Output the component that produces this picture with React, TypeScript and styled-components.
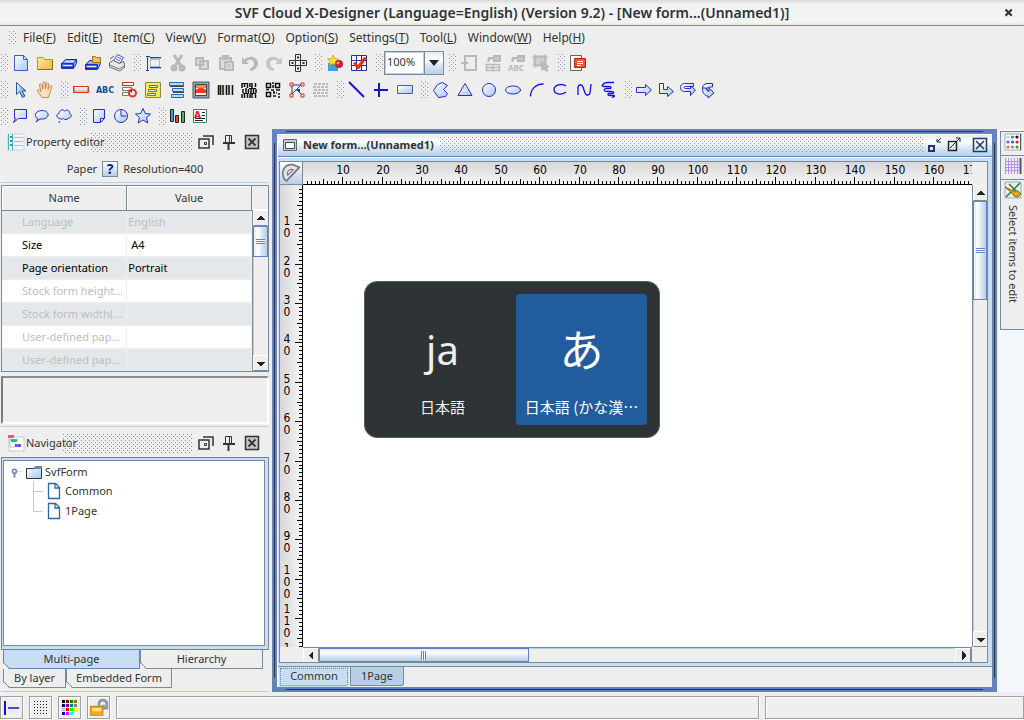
import React, { useEffect, useRef, useState } from "react";
import styled, { createGlobalStyle, css } from "styled-components";

const BLUE = "#6382bf";
const GREY = "#7a8a99";
const PALE = "#b8cfe5";
const SKY = "#c8ddf2";
const FACE = "#eeeeee";
const INK = "#333333";

const GlobalStyle = createGlobalStyle`
  *, *::before, *::after { box-sizing: border-box; }
  body {
    margin: 0;
    background: ${FACE};
    color: ${INK};
    font: 11px/16px "Noto Sans", "Noto Sans CJK JP", sans-serif;
  }
  button, input { font: inherit; color: inherit; }
`;

const dots = (color: string) => css`
  background-image:
    conic-gradient(from 270deg at 1px 1px, ${color} 25%, transparent 0),
    conic-gradient(from 270deg at 1px 1px, ${color} 25%, transparent 0);
  background-size: 4px 4px;
  background-position: 0 0, 2px 2px;
`;

/* ---------- shell ---------- */

const Shell = styled.div`
  display: flex;
  flex-direction: column;
  height: 100vh;
  overflow: hidden;
`;

const TitleBar = styled.header`
  display: flex;
  align-items: center;
  flex: none;
  height: 26px;
  padding: 0 8px 0 22px;
  border-bottom: 1px solid #8b8e7f;
  background: linear-gradient(#d8d8d8, #f1f1f1 4px, #f5f5f5 22px, #e4e4e0);
`;

const AppTitle = styled.h1`
  flex: 1;
  margin: 0;
  text-align: center;
  color: #2e3436;
  font-size: 14px;
  line-height: 20px;
  font-weight: 600;
`;

const PlainButton = styled.button`
  display: flex;
  align-items: center;
  justify-content: center;
  flex: none;
  padding: 0;
  border: 0;
  background: none;
`;

const MenuBar = styled.nav`
  display: flex;
  align-items: center;
  flex: none;
  gap: 6px;
  height: 23px;
  padding-left: 9px;
`;

const MenuItems = styled.div`
  display: flex;
  gap: 11px;
`;

const MenuButton = styled(PlainButton)`
  display: block;
  font-size: 12px;
  white-space: nowrap;
`;

const Grip = styled.span<{ $h?: number }>`
  flex: none;
  width: 8px;
  height: ${(p) => p.$h ?? 17}px;
  ${dots("#8d99a6")}
`;

const ToolRow = styled.div<{ $gap: number; $h?: number }>`
  display: flex;
  align-items: center;
  flex: none;
  gap: ${(p) => p.$gap}px;
  height: ${(p) => p.$h ?? 27}px;
  padding-left: 1px;
`;

const ToolGroup = styled.div`
  display: flex;
  align-items: center;
`;

const ToolButton = styled(PlainButton)<{ $w: number }>`
  width: ${(p) => p.$w}px;
  height: 24px;
`;

const Zoom = styled.div`
  display: flex;
  width: 60px;
  height: 24px;
  border: 1px solid ${GREY};
`;

const ZoomInput = styled.input`
  width: 39px;
  min-width: 0;
  padding: 0 0 2px 1px;
  border: 1px solid ${PALE};
  background: #fff;
`;

const ZoomArrow = styled(PlainButton)`
  flex: 1;
  border-left: 1px solid ${GREY};
  background: linear-gradient(#dfe9f5, #ffffff 35%, #dbe7f4 60%, ${PALE});
`;

const Body = styled.div`
  display: flex;
  flex: 1;
  min-height: 0;
`;

/* ---------- docked panels ---------- */

const Dock = styled.aside`
  display: flex;
  flex-direction: column;
  flex: none;
  width: 269px;
  margin-right: 3px;
  padding-left: 1px;
`;

const PanelHead = styled.div`
  display: flex;
  align-items: center;
  flex: none;
  height: 26px;
  padding: 0 8px 0 6px;
`;

const PanelTitle = styled.h2`
  margin: 0 0 0 1px;
  font-size: 11px;
  line-height: 16px;
  font-weight: 400;
  white-space: nowrap;
`;

const PanelBumps = styled.span<{ $lap: number }>`
  flex: 1;
  height: 19px;
  margin: 0 5px 0 -${(p) => p.$lap}px;
  ${dots("#8593a1")}
`;

const HeadTools = styled.div`
  display: flex;
  gap: 5px;
`;

const HeadTool = styled(PlainButton)`
  width: 18px;
  height: 18px;
`;

const PaperLine = styled.div`
  display: flex;
  align-items: center;
  justify-content: center;
  flex: none;
  gap: 5px;
  height: 28px;
  margin-bottom: 2px;
  border-bottom: 1px solid ${PALE};
`;

const HelpButton = styled(PlainButton)`
  width: 16px;
  height: 16px;
  border: 1px solid ${GREY};
  background: linear-gradient(#fff, ${PALE});
  color: #1414a8;
  font-size: 14px;
  line-height: 14px;
  font-weight: 700;
`;

const PropBox = styled.div`
  display: flex;
  flex: none;
  height: 187px;
  border: 1px solid ${GREY};
  overflow: hidden;
`;

const PropTable = styled.table`
  width: calc(100% - 16px);
  border-collapse: collapse;
  table-layout: fixed;
`;

const HeadCell = styled.th`
  width: 50%;
  height: 24px;
  padding: 0;
  border-right: 1px solid ${GREY};
  border-bottom: 1px solid ${GREY};
  box-shadow: inset 1px 1px #fff;
  font-weight: 400;
`;

const PropRow = styled.tr<{ $on?: boolean }>`
  color: ${(p) => (p.$on ? "#000" : "#bdbdbd")};
  background: #fff;
  &:nth-child(odd) { background: #e4e8eb; }
`;

const PropCell = styled.td<{ $pad: number }>`
  height: 23px;
  padding: 0 0 0 ${(p) => p.$pad}px;
  border-right: 1px solid ${FACE};
  border-bottom: 1px solid ${FACE};
  line-height: 16px;
  white-space: nowrap;
`;

const BarColumn = styled.div`
  display: flex;
  flex-direction: column;
  width: 16px;
`;

const BarHead = styled.div`
  flex: none;
  height: 24px;
  border-bottom: 1px solid #fff;
`;

const Note = styled.div`
  flex: none;
  height: 48px;
  margin-top: 4px;
  border: 2px solid;
  border-color: #8c8c8c #fff #fff #7c7c7c;
`;

const Rule = styled.hr`
  flex: none;
  width: 100%;
  height: 1px;
  margin: 2px 0 3px;
  border: 0;
  background: ${PALE};
`;

const TreeFrame = styled.div`
  display: flex;
  flex: 1;
  min-height: 0;
  margin-top: 1px;
  padding: 2px 3px 3px 1px;
  border: 1px solid ${BLUE};
  border-right-color: ${GREY};
  background: ${SKY};
`;

const Tree = styled.ul`
  flex: 1;
  margin: 0;
  padding: 1px 0 0 5px;
  border: 1px solid ${GREY};
  background: #fff;
  list-style: none;
`;

const TreeItem = styled.li<{ $child?: boolean }>`
  display: flex;
  align-items: center;
  gap: 2px;
  height: ${(p) => (p.$child ? 20 : 19)}px;
  padding-left: ${(p) => (p.$child ? 18 : 0)}px;
`;

const Tabs = styled.div`
  display: flex;
  flex: none;
  padding-left: 2px;
`;

const DockTab = styled.button<{ $w: number; $on?: boolean }>`
  width: ${(p) => p.$w}px;
  height: 19px;
  padding: 0;
  border: 1px solid ${(p) => (p.$on ? BLUE : GREY)};
  border-top: 0;
  background: ${(p) => (p.$on ? SKY : FACE)};
  line-height: 16px;
  clip-path: polygon(0 0, 100% 0, 100% 100%, 6px 100%, 0 13px);
  background-image: linear-gradient(
    45deg,
    transparent 3px,
    ${(p) => (p.$on ? BLUE : GREY)} 3px,
    ${(p) => (p.$on ? BLUE : GREY)} 4px,
    transparent 4px
  );
`;

const DockFoot = styled.div`
  flex: none;
  height: 4px;
  border-bottom: 1px solid ${PALE};
`;

/* ---------- document window ---------- */

const Desk = styled.main`
  display: flex;
  flex: 1;
  min-width: 0;
  padding: 2px;
  background: ${BLUE};
`;

const DeskLine = styled.div`
  display: flex;
  flex: 1;
  min-width: 0;
  padding: 3px;
  background:
    linear-gradient(#333, #333) center top / calc(100% - 24px) 1px no-repeat,
    linear-gradient(#333, #333) center bottom / calc(100% - 24px) 1px no-repeat,
    linear-gradient(#333, #333) left center / 1px calc(100% - 24px) no-repeat,
    linear-gradient(#333, #333) right center / 1px calc(100% - 24px) no-repeat;
`;

const Doc = styled.section`
  display: flex;
  flex-direction: column;
  flex: 1;
  min-width: 0;
  border: 0 solid #fff;
  border-width: 1px 0 0 1px;
  background: ${FACE};
`;

const DocHead = styled.div`
  display: flex;
  align-items: center;
  flex: none;
  height: 22px;
  padding: 0 3px 2px 3px;
  border-bottom: 1px solid ${BLUE};
  background: linear-gradient(#dfe9f5, #ffffff 30%, #dbe7f4 60%, ${PALE});
`;

const DocTitle = styled.h2`
  margin: 0 6px 0 4px;
  font-size: 11px;
  line-height: 16px;
  font-weight: 700;
  white-space: nowrap;
`;

const DocBumps = styled.span`
  flex: 1;
  height: 15px;
  margin-right: 4px;
  ${dots("#7f99cc")}
`;

const DocTools = styled.div`
  display: flex;
`;

const DocTool = styled(PlainButton)<{ $gap?: number }>`
  width: 18px;
  height: 18px;
  margin-left: ${(p) => p.$gap ?? 0}px;
`;

const Pane = styled.div`
  display: flex;
  flex: 1;
  min-height: 0;
  padding: 3px 4px 3px 0;
  border-top: 1px solid #fff;
  border-bottom: 1px solid ${GREY};
  background: ${SKY};
`;

const Sheet = styled.div`
  display: grid;
  flex: 1;
  min-width: 0;
  grid-template-columns: 23px minmax(0, 1fr) 15px;
  grid-template-rows: 23px minmax(0, 1fr) 15px;
  margin-left: 1px;
  border: 1px solid ${GREY};
  background: ${FACE};
`;

const RulerCorner = styled(PlainButton)`
  border-right: 1px solid ${GREY};
  border-bottom: 1px solid ${GREY};
  background: linear-gradient(#fff, ${PALE});
`;

const TopRuler = styled.svg`
  display: block;
  width: 100%;
  height: 23px;
  border-bottom: 1px solid #000;
  background: linear-gradient(#d8d8d8, #f4f4f4);
  font: 12px "DejaVu Sans Condensed", "DejaVu Sans", sans-serif;
  font-stretch: condensed;
`;

const SideRuler = styled(TopRuler)`
  width: 23px;
  height: 100%;
  border-bottom: 0;
  border-right: 1px solid #000;
  background: linear-gradient(90deg, #d8d8d8, #f4f4f4);
`;

const Canvas = styled.div`
  position: relative;
  background: #fff;
  overflow: hidden;
`;

const Switcher = styled.div`
  position: absolute;
  left: 61px;
  top: 96px;
  display: flex;
  padding: 12px;
  gap: 8px;
  border: 1px solid #565b5d;
  border-radius: 13px;
  background: #2e3436;
`;

const Source = styled.button<{ $on?: boolean }>`
  display: flex;
  flex-direction: column;
  align-items: center;
  width: 131px;
  height: 131px;
  padding: 26px 0 0;
  border: 0;
  border-radius: 4px;
  background: ${(p) => (p.$on ? "#215d9c" : "transparent")};
  color: ${(p) => (p.$on ? "#ffffff" : "#eeeeec")};
`;

const SourceSign = styled.span<{ $size: number }>`
  font-size: ${(p) => p.$size}px;
  line-height: 60px;
`;

const SourceName = styled.span`
  margin-top: 16px;
  font-family: "Noto Sans CJK JP", sans-serif;
  font-size: 15px;
  line-height: 22px;
  white-space: nowrap;
`;

const DocTabs = styled.div`
  display: flex;
  align-items: flex-start;
  flex: none;
  height: 20px;
`;

const DocTab = styled.button<{ $on?: boolean }>`
  width: ${(p) => (p.$on ? 70 : 54)}px;
  height: ${(p) => (p.$on ? 20 : 19)}px;
  padding: 0;
  margin-left: 1px;
  border: 1px solid ${GREY};
  border-top: 0;
  border-radius: 0 0 3px 0;
  background: ${PALE};
  line-height: 16px;
  ${(p) =>
    p.$on &&
    css`
      border: 2px solid ${SKY};
      border-top: 0;
      background: ${SKY};
      outline: 1px dotted ${BLUE};
      outline-offset: -2px;
    `}
`;

/* ---------- scroll bars ---------- */

const Bar = styled.div<{ $across?: boolean }>`
  display: flex;
  flex: 1;
  flex-direction: ${(p) => (p.$across ? "row" : "column")};
  min-height: 0;
  min-width: 0;
  border: 0 solid ${GREY};
  border-width: ${(p) => (p.$across ? "1px 1px 0 0" : "0 0 0 1px")};
  background: ${FACE};
`;

const BarButton = styled(PlainButton)<{ $across?: boolean }>`
  width: ${(p) => (p.$across ? "16px" : "100%")};
  height: ${(p) => (p.$across ? "100%" : "16px")};
  border: 1px solid #fff;
  border-right-color: ${(p) => (p.$across ? GREY : FACE)};
  border-bottom-color: ${(p) => (p.$across ? FACE : GREY)};
`;

const Track = styled.div<{ $across?: boolean }>`
  display: flex;
  flex-direction: ${(p) => (p.$across ? "row" : "column")};
  flex: 1;
  min-height: 0;
  box-shadow: inset 1px 1px ${PALE};
`;

const Thumb = styled.div<{ $across?: boolean; $size: number }>`
  display: flex;
  align-items: center;
  justify-content: center;
  flex: 0 0 ${(p) => p.$size}%;
  border: 1px solid ${BLUE};
  background: linear-gradient(${(p) => (p.$across ? "180deg" : "90deg")}, #dfe9f5, #ffffff 30%, #dbe7f4 60%, ${PALE});
  &::after {
    content: "";
    width: ${(p) => (p.$across ? 5 : 9)}px;
    height: ${(p) => (p.$across ? 9 : 5)}px;
    background: repeating-linear-gradient(${(p) => (p.$across ? "90deg" : "180deg")}, ${BLUE} 0 1px, #fff 1px 2px);
  }
`;

const arrows = {
  up: "M0 6h9L5 2H4z",
  down: "M0 3h9L5 7H4z",
  left: "M6 0v9L2 5V4z",
  right: "M3 0v9l4-4V4z",
};

const Arrow = ({ to }: { to: keyof typeof arrows }) => (
  <svg width="9" height="9" viewBox="0 0 9 9" shapeRendering="crispEdges" aria-hidden>
    <path d={arrows[to]} fill="#222" />
  </svg>
);

const ScrollBar = ({ across, size }: { across?: boolean; size: number }) => (
  <Bar $across={across}>
    <BarButton $across={across} aria-label="Scroll back">
      <Arrow to={across ? "left" : "up"} />
    </BarButton>
    <Track $across={across}>
      <Thumb $across={across} $size={size} />
    </Track>
    <BarButton $across={across} aria-label="Scroll on">
      <Arrow to={across ? "right" : "down"} />
    </BarButton>
  </Bar>
);

/* ---------- side strip and status bar ---------- */

const Strip = styled.aside`
  flex: none;
  width: 27px;
  padding: 2px 0 0 3px;
  background: #f3f7fb;
`;

const StripTabs = styled.div`
  display: flex;
  flex-direction: column;
  border: 1px solid ${GREY};
  border-right: 0;
  background: ${FACE};
`;

const StripTab = styled.button`
  display: flex;
  align-items: center;
  gap: 6px;
  width: 23px;
  height: 24px;
  padding: 1px 0 0;
  border: 0;
  border-bottom: 1px solid ${GREY};
  background: none;
  writing-mode: vertical-rl;
  line-height: 16px;
  &:last-child {
    height: 149px;
    border-bottom: 0;
  }
`;

const StatusBar = styled.footer`
  display: flex;
  align-items: stretch;
  flex: none;
  gap: 6px;
  height: 28px;
  padding: 4px 0 1px;
`;

const bevel = css`
  border: 1px solid #a0a0a0;
  box-shadow: inset 1px 1px #fff, 1px 1px #fff;
`;

const StatusButton = styled(PlainButton)`
  width: 23px;
  ${bevel}
`;

const StatusCell = styled.div<{ $grow: number }>`
  flex: ${(p) => p.$grow} 1 0;
  ${bevel}
`;

/* ---------- icons ---------- */

const N = "#2a2ad0";
const G = "#b9b9b9";
const F = "url(#gl)";

const icons: Record<string, React.ReactNode> = {
  page: <path d="M2.500 1.500h9l4 4v11h-13zM11.500 1.500v4h4" fill={F} stroke="#3a5fc0" />,
  folder: (
    <g>
      <path d="M1.500 3.500h6l1 2h8v10h-15z" fill="url(#gf)" stroke="#c0962c" />
      <path d="M1.500 15.500h15v-9" stroke="#8a6a1c" />
    </g>
  ),
  drive: (
    <g stroke="#1c2fb8">
      <path d="M1.500 9.500l4-4h11v4l-3 5h-12z" fill="#8fb0f0" />
      <path d="M1.500 9.500h12v4h-12z" fill="#4468dc" />
      <path d="M3 11.500h9" stroke="#e8f0ff" />
      <path d="M6 7.500h8" stroke="#dfeaff" />
      <path d="M13.500 9.500l3-4" />
    </g>
  ),
  driveSave: (
    <g stroke="#1c2fb8">
      <path d="M1.500 10.500l4-4h11v3l-3 6h-12z" fill="#8fb0f0" />
      <path d="M1.500 10.500h12v4h-12z" fill="#4468dc" />
      <path d="M3 12.500h9" stroke="#e8f0ff" />
      <path d="M8.500 2.500h3l1 1h4v5h-8z" fill="#f2c04a" stroke="#a87414" />
    </g>
  ),
  printer: (
    <g>
      <path d="M5.500 6.500l4-6 6 3-4 6z" fill="#fff" stroke="#3c56c8" />
      <path d="M8 5l4 2M9.500 3l4 2" stroke="#3c56c8" />
      <path d="M1.500 8.500l4-2 6 3 4-2 1 3v3l-5 3.500-10-4z" fill="#e8e8e8" stroke="#666" />
      <path d="M2 11l9 4 5-3" stroke="#777" fill="none" />
      <path d="M2 5l4-3" stroke="#3c56c8" />
    </g>
  ),
  align: (
    <g fill="none" stroke="#1e3fb4">
      <path d="M2.500 2v15M1 2.500h4M1 16.500h3M5 3.500h11M5 13.500h11" />
      <path d="M5.500 5.500h9v7h-9z" stroke="#5b7fd0" strokeDasharray="1 1" />
      <path d="M5 4.500h11M5 14.500h11" stroke="#9ab4e8" />
    </g>
  ),
  cut: (
    <g fill="none" stroke={G} strokeWidth="3">
      <path d="M5 1l7 11M13 1L6 12" />
      <circle cx="5" cy="14" r="2" />
      <circle cx="13" cy="14" r="2" />
    </g>
  ),
  copy: (
    <g fill="#dcdcdc" stroke={G} strokeWidth="2">
      <path d="M3 4h7v7H3zM7 7h8v8H7z" />
    </g>
  ),
  paste: (
    <g fill="#dcdcdc" stroke={G} strokeWidth="2">
      <path d="M3 4h11v11H3zM6 2h5v3H6z" />
      <path d="M8 8h8v8H8z" />
      <path d="M10 11h4M10 13h4" strokeWidth="1" />
    </g>
  ),
  undo: <path d="M1 3v7h7L5.500 7.500C9 4 13 6 13 9.500 13 12 11 14 9 14v3c4 0 8-3 8-7.500C17 3 9 .5 3.500 5.500z" fill={G} />,
  redo: <path d="M17 3v7h-7l2.500-2.500C9 4 5 6 5 9.500 5 12 7 14 9 14v3c-4 0-8-3-8-7.500C1 3 9 .5 14.500 5.500z" fill="#c6c6c6" />,
  move: (
    <g fill="#eee" stroke="#333">
      <path d="M6.500.5h5v6h6v5h-6v6h-5v-6h-6v-5h6z" />
      <path d="M6.500 6.500h5v5h-5zM9 2v3M9 13v3M2 9h3M13 9h3M8 3.500h2M8 14.500h2M3.500 8v2M14.500 8v2" />
    </g>
  ),
  shapes: (
    <g>
      <path d="M2 9h10v8H2z" fill="#3ea0dc" />
      <path d="M3 9l2-2h8v2z" fill="#a8dcf4" />
      <path d="M7 1l1.700 3.500 3.800.5-2.800 2.600.8 3.900L7 9.600l-3.500 1.900.8-3.900L1.500 5l3.800-.5z" fill="#ffe526" stroke="#b89000" strokeWidth=".7" />
      <circle cx="13" cy="10" r="4" fill="#c4253c" />
      <circle cx="12" cy="9" r="1.300" fill="#f6a8b0" />
    </g>
  ),
  gridCheck: (
    <g>
      <path d="M1.500 1.500h15v15h-15zM1 6.500h16M1 11.500h16M6.500 1v16M11.500 1v16" fill="#fff" stroke="#24338c" />
      <path d="M3 9l3-1 2 3 6-8 3 1-8 11H7z" fill="#ee2a1c" />
    </g>
  ),
  insert: (
    <g fill="none" stroke={G} strokeWidth="2">
      <path d="M5 6V2h11v14H5v-4M1 9h7M5 6v6" />
    </g>
  ),
  cellLink: (
    <g stroke={G} fill="none">
      <path d="M2.500 10.500h13v6h-13zM2 13.500h14M9 10v7" strokeWidth="1.500" />
      <path d="M10 2h6v5h-6zM4 8l1-4h4" fill="#c6c6c6" strokeWidth="2" />
    </g>
  ),
  textLink: (
    <g stroke={G} fill="none">
      <path d="M10 2h6v5h-6zM4 8l1-4h4" fill="#c6c6c6" strokeWidth="2" />
      <text x="0" y="17" fill={G} stroke="none" fontSize="8" fontWeight="700">ABC</text>
    </g>
  ),
  pick: (
    <g stroke={G} fill={G}>
      <path d="M2.500 2.500h11v9h-11z" strokeWidth="2" fill="#cfcfcf" />
      <path d="M0 3h16M0 11h10M3 0v14M13 0v8" />
      <path d="M9 7l8 6-3 .5 2 3-2 1-2-3-2 2z" />
    </g>
  ),
  report: (
    <g>
      <path d="M1.500 1.500h11v15h-11z" fill="#fff" stroke="#666" />
      <path d="M5.500 4.500h11v9h-11z" fill="#e65a3a" stroke="#b8281c" />
      <path d="M8 7.500h6M8 9.500h6M8 11.500h4" stroke="#fff" />
    </g>
  ),
  pointer: <path d="M4.500 1.500v12l3-3 3 6 2.500-1.500-3-5h4z" fill="url(#gb)" stroke="#2c5a94" />,
  hand: (
    <path
      d="M6 16.500L1.500 10c-.5-1.500 1-2 2-1L5 10.500 3.500 4c0-1.500 1.800-1.500 2.200 0L7 8V2c0-1.500 2-1.500 2.200 0L9.500 8l1-5.500c.3-1.300 2-1 2 .5L12 8.500l2-3.500c.8-1 2.200-.3 1.800 1L13.500 13l-1 3.500z"
      fill="#fde0c0"
      stroke="#c88a48"
    />
  ),
  field: (
    <g>
      <path d="M1.500 5.500h15v6h-15z" fill="#e4432a" stroke="#d8361c" />
      <path d="M2.500 6h13v5h-13z" fill="url(#gg)" />
    </g>
  ),
  abc: (
    <text x="9" y="12" textAnchor="middle" fontFamily="DejaVu Sans" fontSize="8" fontWeight="700" fill="#16489c">
      ABC
    </text>
  ),
  fieldLink: (
    <g fill="none">
      <path d="M2.500 1.500h11v3h-11z" fill="#fff" stroke="#c83018" />
      <path d="M2.500 6.500h9v3h-9zM2.500 11.500h6v3h-6z" fill="#fff" stroke="#777" />
      <circle cx="12.500" cy="12" r="3.500" stroke="#e03a1c" strokeWidth="2" />
      <path d="M8 9h4v3z" fill="#c02010" />
    </g>
  ),
  subform: (
    <g>
      <path d="M1.500 1.500h15v15h-15z" fill="#f8ee4a" stroke="#8a8a4a" />
      <path d="M5.500 4.500h8v2h-8zM4.500 8.500h8v2h-8zM3.500 12.500h8v2h-8z" fill="#dff0f8" stroke="#3f7aaa" />
    </g>
  ),
  records: (
    <g fill="#b9d9f6" stroke="#2a62b4">
      <path d="M1.500 1.500h14v3h-14zM4.500 7.500h11v3h-11zM3.500 13.500h12v3h-12z" />
      <path d="M2 5.500h14M5 11.500h11" stroke="#345" />
    </g>
  ),
  image: (
    <g>
      <path d="M1 1h16v16H1z" fill="#8fa0b8" stroke="#555" />
      <path d="M3.500 3.500h11v11h-11z" fill="#fff2d0" stroke="#3a4658" />
      <path d="M4 4h10v3H4z" fill="#ef8a58" />
      <path d="M4 12V9l3-2h4l3 2v3z" fill="#f03e1c" />
      <path d="M5 12h8v2H5z" fill="#fff6e0" />
    </g>
  ),
  barcode: (
    <g>
      <path d="M2 4h15v10H2z" fill="#ddd" />
      <path d="M2.500 4v10M4.500 4v10M7 4v10M10.500 4v10M13 4v10M16.500 4v10" stroke="#111" strokeWidth="1.500" />
    </g>
  ),
  stacked: (
    <g stroke="#111">
      <path d="M2 2v5M4.500 2v4M7.500 2v5M10 2v4M12 2v5M15.500 2v4M3 8v4M6 7v5M8.500 8v4M11 7v5M13.500 7v5M16 8v4M2 13v4M4.500 13v4M7.500 13v4M10 13v4M12 13v4M15.500 13v4" strokeWidth="1.500" />
      <path d="M2 2.500h5M9 7.500h7M3 12.500h6M10 12.500h6" />
    </g>
  ),
  qr: (
    <g fill="none" stroke="#111" strokeWidth="1.500">
      <path d="M2.500 2.500h4v4h-4zM11.500 2.500h4v4h-4zM2.500 11.500h4v4h-4z" />
      <path d="M8 2h2M9 4v3M2 8.500h3M7 9h3M12 9h4M9 12h2M12 12h1M14 13h2M9 15h3M14 16h2M10 10v2" />
    </g>
  ),
  nodes: (
    <g>
      <path d="M4 4h10M4 4v10M4 13l9-9M9 9l5 5" stroke="#1a3fb8" fill="none" />
      <path d="M2 2h3v3H2zM13 2h3v3h-3zM2 13h3v3H2zM13 13h3v3h-3z" fill="#fff" stroke="#d02818" />
      <path d="M7 8h5v4z" fill="#1a3fb8" />
    </g>
  ),
  mesh: (
    <g fill="none" stroke="#bbb" strokeWidth="2" strokeDasharray="3 1">
      <path d="M2 3h14M1 6h16M2 9h14M1 12h16M2 15h14" />
    </g>
  ),
  line: <path d="M1 1l15 15" stroke="#1515c8" strokeWidth="2" fill="none" />,
  cross: <path d="M2 9h14M7 2v14" stroke="#1515c8" strokeWidth="2" fill="none" />,
  rect: <path d="M1.500 4.500h15v8h-15z" fill={F} stroke="#4a5ac8" />,
  poly: <path d="M1.500 9.500l4-6 5-2 5 3-4 4 4 4-2 3-7 1z" fill={F} stroke={N} />,
  tri: <path d="M9 2.500l7 12H2z" fill={F} stroke={N} />,
  circle: <circle cx="9" cy="9" r="6.500" fill={F} stroke={N} />,
  ellipse: <ellipse cx="9" cy="9" rx="7.500" ry="4" fill={F} stroke={N} />,
  arc: <path d="M2.500 15.500c0-7 5-12.500 13-12.500" fill="none" stroke="#1010ee" strokeWidth="1.300" />,
  openArc: <path d="M14 5C10 2 2 4 2 8.500S9 15 14 11" fill="none" stroke="#1010ee" strokeWidth="1.300" />,
  curve: <path d="M2 14V6c1-3 4-3 5 0l2 6c1 3 4 3 5 0l1-9" fill="none" stroke="#1010ee" strokeWidth="1.300" />,
  scribble: <path d="M14 1.500H7c-5 1-6 4-3 4h6c2 1 1 2-1 2H6c-3 1-2 3 1 3h4c4 0 3 2 1 2H9c-2 1-1 2 1 2l4 0c2 1-3 2-1 2" fill="none" stroke="#1010ee" strokeWidth="1.300" />,
  arrow: <path d="M1.500 6.500h9v-3l6 5.500-6 5.500v-3h-9z" fill={F} stroke={N} />,
  arrowDown: <path d="M2.500 2.500h4v6h4v-3l6 5-6 5v-3h-8z" fill={F} stroke={N} />,
  arrowLoop: <path d="M14.500 2.500h-9c-3 0-4 2-4 4s1 4 4 4h6v4l5-5.500-5-4v2.500h-5c-2 0-2-2 0-2h8z" fill={F} stroke={N} />,
  arrowCurl: <path d="M11.500 2.500H6C3 3 1.500 4.500 1.500 7c0 5 2 8 5.500 8v2l6-5-5-5v3c-2 0-3-1-3-2.500L9 6h2.500zM2 7h3l3 4" fill={F} stroke={N} />,
  speech: <path d="M3.500 2.500h12v9h-8l-5 4 2-4h-1z" fill={F} stroke={N} />,
  speechRound: <path d="M5 12C1 10 1 4 9 3.500c8 0 8 8 1 8.500H7l-4 3z" fill={F} stroke={N} />,
  cloud: <path d="M5 11.500C1 11 1 7 4 6.500 4 3 8 2 9.500 4c3-2 6 0 5 2.500 3 1 2 4.500-1 4.500-1 2-4 2-5 .5-1 1-3 1-3.500 0zM5 14l-1.500 2" fill={F} stroke={N} />,
  memo: <path d="M3.500 2.500h11v9l-4 4h-7zM14.500 11.500h-4v4" fill={F} stroke={N} />,
  clock: (
    <g fill={F} stroke={N}>
      <circle cx="9" cy="9" r="6.500" />
      <path d="M9 3v6h5" fill="none" />
    </g>
  ),
  star: <path d="M9 1.500l2.200 5 5.300.5-4 3.500 1.300 5.500L9 13l-4.800 3 1.300-5.500-4-3.500 5.300-.5z" fill={F} stroke={N} />,
  chart: (
    <g stroke="#222">
      <path d="M1.500 2.500h3v12h-3z" fill="#39a0e0" />
      <path d="M6.500 8.500h3v7h-3z" fill="#e84a3a" />
      <path d="M12.500 4.500h3v11h-3z" fill="#4ab84a" />
    </g>
  ),
  article: (
    <g>
      <path d="M2.500 2.500h13v13h-13z" fill="#fff" stroke="#2e8d6e" />
      <text x="3" y="11" fontFamily="DejaVu Sans" fontSize="9" fontWeight="700" fill="#e01c1c">A</text>
      <path d="M11 5.500h3M11 8.500h3M4 11.500h10M4 13.500h8" stroke="#222" />
    </g>
  ),
  props: (
    <g>
      <path d="M1 1h16v16H1z" fill="#f4fafc" stroke="#c8d0e8" />
      <path d="M5.500 1v16M1.500 1v16" stroke="#48b0c0" />
      <path d="M3 4h2M3 8h2M3 12h2" stroke="#28a080" strokeWidth="2" />
      <path d="M7 4.500h9M7 8.500h9M7 12.500h9" stroke="#8ec6d4" />
    </g>
  ),
  nav: (
    <g>
      <path d="M2 3h15v14H2z" fill="#fff" stroke="#c8c8c8" />
      <path d="M1 1h6v3H1z" fill="#d8608c" />
      <path d="M4 5h6v3H4z" fill="#18c860" />
      <path d="M8 10h6v3H8z" fill="#7a50d8" />
      <path d="M3 4v9h5" fill="none" stroke="#bbb" />
    </g>
  ),
  float: (
    <g fill="none" stroke="#333">
      <path d="M2 6h10v9H2zM6 3h10v9" strokeWidth="1.500" />
      <path d="M7.500 9.500h2v2h-2z" />
    </g>
  ),
  pin: (
    <g fill="none" stroke="#333">
      <path d="M5.500 2.500h6v7h-6zM9.500 3v6" />
      <path d="M3 10h12M8.500 11v6" strokeWidth="2" />
    </g>
  ),
  shut: (
    <g fill="none" stroke="#333">
      <path d="M2.500 2.500h13v13h-13z" strokeWidth="1.500" fill="#c4c4c4" />
      <path d="M5.500 5.500l7 7M12.500 5.500l-7 7" strokeWidth="1.800" />
    </g>
  ),
  close: <path d="M4.500 4.500l8 8M12.500 4.500l-8 8" stroke="#2e3436" strokeWidth="2.800" fill="none" />,
  win: (
    <g>
      <path d="M2.500 3.500h13v11h-13z" fill="#c8c8d0" stroke="#666" />
      <path d="M4.500 6.500h9v6h-9z" fill="#fff" stroke="#334a80" />
    </g>
  ),
  winMin: (
    <g fill="none" stroke="#223">
      <path d="M2 10h5v5H2z" fill="#dbe7f4" stroke="#22386a" strokeWidth="2" />
      <path d="M14 2l-4 4M10 3v3h4" />
    </g>
  ),
  winMax: (
    <g fill="none" stroke="#223">
      <path d="M3.500 5.500h8v9h-8z" strokeWidth="1.500" />
      <path d="M5 12L15 2M11 2h4v4" />
    </g>
  ),
  winClose: <path d="M2.500 2.500h13v13h-13zM5 5l8 8M13 5l-8 8" fill="none" stroke="#223a66" strokeWidth="1.500" />,
  protractor: (
    <g stroke="#777" fill="#dfe3ea">
      <path d="M3 14.500C-1 7 4 1 10 1.500c4 .5 5 3 7 2L5 16z" strokeWidth="1.500" />
      <path d="M6 11c-1-4 2-6 5-5z" fill="#fff" />
    </g>
  ),
  palette: (
    <g>
      <path d="M1 1h16v16H1z" fill="#fff" stroke="#aaa" />
      {["#7fe8f0", "#777", "#111", "#9050e8", "#1d6ff0", "#e81c1c", "#f07818", "#8080e8", "#18a818"].map((c, i) => (
        <circle key={c} cx={4 + (i % 3) * 4.500} cy={4 + Math.floor(i / 3) * 5} r="1.600" fill={c} />
      ))}
      <path d="M16.500 1v16" stroke="#555" />
    </g>
  ),
  lattice: (
    <g>
      <path d="M1 1h15v16H1z" fill="#f4ecff" />
      <path d="M4.500 1v16M7.500 1v16M10.500 1v16M13.500 1v16M1 4.500h14M1 7.500h14M1 10.500h14M1 13.500h14M1.500 1v16" stroke="#b48ef0" />
      <path d="M16.500 1v16" stroke="#555" strokeWidth="2" />
    </g>
  ),
  compass: (
    <g>
      <path d="M1 1h16v16H1z" fill="#e4f0e4" stroke="#9ab" />
      <path d="M2 16L16 2M5 3l8 8" stroke="#2a7a4a" strokeWidth="1.500" />
      <path d="M1 6l8 4 5 0 3 3-3 3-4-1-2-3z" fill="#dca818" stroke="#8a6408" />
    </g>
  ),
  guide: (
    <g>
      <path d="M2 2v14" stroke="#1414e0" strokeWidth="2" />
      <path d="M5 9h11" stroke="#1414b0" strokeWidth="1.500" />
    </g>
  ),
  dotGrid: (
    <g stroke="#222" strokeDasharray="1 2">
      <path d="M2 2.500h14M2 5.500h14M2 8.500h14M2 11.500h14M2 14.500h14" />
    </g>
  ),
  colors: (
    <g>
      {["#000", "#800000", "#008000", "#808000", "#000080", "#800080", "#008080", "#808080", "#c0c0c0", "#f00", "#0f0", "#ff0", "#00f", "#f0f", "#0ff", "#fff"].map((c, i) => (
        <rect key={c} x={1 + (i % 4) * 4} y={1 + Math.floor(i / 4) * 4} width="3" height="3" fill={c} />
      ))}
    </g>
  ),
  lock: (
    <g>
      <path d="M9 8V5c0-4 7-4 7 0v4h-3V6" fill="none" stroke="#8a98a8" strokeWidth="2.500" />
      <path d="M1.500 7.500h11v8h-11z" fill="#f6a81c" stroke="#c88818" />
      <path d="M3 9h8v3H3z" fill="#ffe08a" />
    </g>
  ),
  handle: (
    <g stroke={BLUE} fill="none">
      <circle cx="7" cy="8" r="2.500" strokeWidth="2" />
      <path d="M7 11v5" strokeWidth="2.500" />
      <path d="M10 8.500h7" stroke={PALE} />
    </g>
  ),
  treeFolder: (
    <g>
      <path d="M1.500 5.500h8l1-2h6v12h-15z" fill={F} stroke="#333" />
      <path d="M10 3h7v3h-8z" fill={BLUE} />
    </g>
  ),
  treePage: <path d="M3.500 1.500h7l4 4v11h-11zM10 2v4h4" fill="#fff" stroke="#2f66a8" strokeWidth="1.300" />,
};

const Icon = ({ name, size = 18 }: { name: string; size?: number }) => (
  <svg width={size} height={size} viewBox="0 0 18 18" fill="none" aria-hidden>
    {icons[name]}
  </svg>
);

const Defs = styled.svg`
  position: absolute;
`;

const Paints = () => (
  <Defs width="0" height="0" aria-hidden>
    <defs>
      <linearGradient id="gl" x1="0" y1="0" x2="1" y2="1">
        <stop offset="0" stopColor="#ffffff" />
        <stop offset="1" stopColor="#a4c8ee" />
      </linearGradient>
      <linearGradient id="gf" x1="0" y1="0" x2="1" y2="1">
        <stop offset="0" stopColor="#ffe9a0" />
        <stop offset="1" stopColor="#eab840" />
      </linearGradient>
      <linearGradient id="gb" x1="0" y1="0" x2="1" y2="0">
        <stop offset="0" stopColor="#e0f0ff" />
        <stop offset="1" stopColor="#4f8fd0" />
      </linearGradient>
      <linearGradient id="gg" x1="0" y1="0" x2="0" y2="1">
        <stop offset="0" stopColor="#ffffff" />
        <stop offset="1" stopColor="#c0c0c0" />
      </linearGradient>
    </defs>
  </Defs>
);

const Tools = ({ names, pitch = 24 }: { names: string[]; pitch?: number }) => (
  <ToolGroup role="group">
    <Grip />
    {names.map((n) => (
      <ToolButton key={n} $w={pitch} aria-label={n}>
        <Icon name={n} />
      </ToolButton>
    ))}
  </ToolGroup>
);

/* ---------- rulers: 100 px to the inch, one tick to the millimetre ---------- */

const MM = 3.937;
const DIGIT = 12;
const tickLength = (mm: number) => (mm % 10 === 0 ? 8 : mm % 5 === 0 ? 6 : 4);

/** Length of the drawn ruler, kept up to date with its size, and the marks that fit on it. */
function useMarks(side: "width" | "height") {
  const ref = useRef<SVGSVGElement>(null);
  const [length, setLength] = useState(0);
  useEffect(() => {
    const el = ref.current!;
    const measure = () => setLength(el.getBoundingClientRect()[side]);
    measure();
    const watch = new ResizeObserver(measure);
    watch.observe(el);
    return () => watch.disconnect();
  }, [side]);
  const span = Math.floor(length / MM);
  const ticks = Array.from({ length: span }, (_, i) => i + 1);
  const tens = Array.from({ length: Math.floor((span + 3) / 10) }, (_, i) => (i + 1) * 10);
  return { ref, length, ticks, tens };
}

const AcrossRuler = () => {
  const { ref, ticks, tens } = useMarks("width");
  return (
    <TopRuler ref={ref} aria-hidden shapeRendering="crispEdges">
      <path stroke="#000" d={ticks.map((m) => `M${Math.round(m * MM) + 0.5} 23v-${tickLength(m)}`).join("")} />
      {tens.map((t) => (
        <text key={t} x={Math.round(t * MM) + 1} y="12" textAnchor="middle">
          {t}
        </text>
      ))}
    </TopRuler>
  );
};

const DownRuler = () => {
  const { ref, length, ticks, tens } = useMarks("height");
  const digits = tens.flatMap((t) =>
    String(t)
      .split("")
      .map((digit, i, all) => ({
        key: `${t}-${i}`,
        digit,
        y: Math.round(t * MM) + (i + 1) * DIGIT - (all.length * DIGIT) / 2 + 1,
      }))
      .filter((d) => d.y < length + DIGIT)
  );
  return (
    <SideRuler ref={ref} aria-hidden shapeRendering="crispEdges">
      <path stroke="#000" d={ticks.map((m) => `M23 ${Math.round(m * MM) + 0.5}h-${tickLength(m)}`).join("")} />
      {digits.map((d) => (
        <text key={d.key} x="7" y={d.y} textAnchor="middle">
          {d.digit}
        </text>
      ))}
    </SideRuler>
  );
};

/* ---------- page ---------- */

const menus = [
  ["File", "F"],
  ["Edit", "E"],
  ["Item", "C"],
  ["View", "V"],
  ["Format", "O"],
  ["Option", "S"],
  ["Settings", "T"],
  ["Tool", "L"],
  ["Window", "W"],
  ["Help", "H"],
];

const properties = [
  { name: "Language", value: "English" },
  { name: "Size", value: "A4", on: true, pad: 4 },
  { name: "Page orientation", value: "Portrait", on: true },
  { name: "Stock form height..." },
  { name: "Stock form width(..." },
  { name: "User-defined pap..." },
  { name: "User-defined pap..." },
];

const PanelHeader = ({ icon, title, lap }: { icon: string; title: string; lap: number }) => (
  <PanelHead>
    <Icon name={icon} />
    <PanelTitle>{title}</PanelTitle>
    <PanelBumps $lap={lap} />
    <HeadTools>
      <HeadTool aria-label="Float"><Icon name="float" /></HeadTool>
      <HeadTool aria-label="Pin"><Icon name="pin" /></HeadTool>
      <HeadTool aria-label="Close panel"><Icon name="shut" /></HeadTool>
    </HeadTools>
  </PanelHead>
);

const Branch = ({ last }: { last?: boolean }) => (
  <svg width="16" height="20" viewBox="0 0 16 20" aria-hidden>
    <path d={last ? "M6.500 0v10.500h9" : "M6.500 0v20M6.500 10.500h9"} stroke={PALE} fill="none" />
  </svg>
);

export default function App() {
  return (
    <Shell>
      <GlobalStyle />
      <Paints />
      <TitleBar>
        <AppTitle>SVF Cloud X-Designer (Language=English) (Version 9.2) - [New form...(Unnamed1)]</AppTitle>
        <PlainButton aria-label="Close"><Icon name="close" size={14} /></PlainButton>
      </TitleBar>

      <MenuBar>
        <Grip $h={13} />
        <MenuItems>
          {menus.map(([label, key]) => (
            <MenuButton key={label}>
              {label}(<u>{key}</u>)
            </MenuButton>
          ))}
        </MenuItems>
      </MenuBar>

      <ToolRow $gap={5}>
        <Tools names={["page", "folder", "drive", "driveSave", "printer"]} />
        <Tools names={["align", "cut", "copy", "paste", "undo", "redo", "move"]} />
        <Tools names={["shapes", "gridCheck"]} />
        <ToolGroup>
          <Grip />
          <Zoom>
            <ZoomInput aria-label="Zoom" defaultValue="100%" />
            <ZoomArrow aria-label="Zoom choices">
              <svg width="10" height="6" viewBox="0 0 10 6" aria-hidden>
                <path d="M0 0h10L5 6z" fill="#222" />
              </svg>
            </ZoomArrow>
          </Zoom>
        </ToolGroup>
        <Tools names={["insert", "cellLink", "textLink", "pick"]} />
        <Tools names={["report"]} />
      </ToolRow>
      <ToolRow $gap={4}>
        <Tools names={["pointer", "hand"]} />
        <Tools names={["field", "abc", "fieldLink", "subform", "records", "image", "barcode", "stacked", "qr", "nodes", "mesh"]} />
        <Tools names={["line", "cross", "rect"]} />
        <Tools names={["poly", "tri", "circle", "ellipse", "arc", "openArc", "curve", "scribble"]} />
        <Tools names={["arrow", "arrowDown", "arrowLoop", "arrowCurl"]} pitch={22} />
      </ToolRow>
      <ToolRow $gap={5} $h={26}>
        <Tools names={["speech", "speechRound", "cloud"]} pitch={22} />
        <Tools names={["memo", "clock", "star"]} pitch={22} />
        <Tools names={["chart", "article"]} pitch={22} />
      </ToolRow>

      <Body>
        <Dock>
          <PanelHeader icon="props" title="Property editor" lap={14} />
          <PaperLine>
            <span>Paper</span>
            <HelpButton>?</HelpButton>
            <span>Resolution=400</span>
          </PaperLine>
          <PropBox>
            <PropTable>
              <thead>
                <tr>
                  <HeadCell>Name</HeadCell>
                  <HeadCell>Value</HeadCell>
                </tr>
              </thead>
              <tbody>
                {properties.map((p, i) => (
                  <PropRow key={i} $on={p.on}>
                    <PropCell $pad={20}>{p.name}</PropCell>
                    <PropCell $pad={p.pad ?? 1}>{p.value}</PropCell>
                  </PropRow>
                ))}
              </tbody>
            </PropTable>
            <BarColumn>
              <BarHead />
              <ScrollBar size={24} />
            </BarColumn>
          </PropBox>
          <Note />
          <Rule />
          <PanelHeader icon="nav" title="Navigator" lap={14} />
          <TreeFrame>
            <Tree>
              <TreeItem>
                <Icon name="handle" size={14} />
                <Icon name="treeFolder" />
                SvfForm
              </TreeItem>
              <TreeItem $child>
                <Branch />
                <Icon name="treePage" />
                Common
              </TreeItem>
              <TreeItem $child>
                <Branch last />
                <Icon name="treePage" />
                1Page
              </TreeItem>
            </Tree>
          </TreeFrame>
          <Tabs>
            <DockTab $w={137} $on>Multi-page</DockTab>
            <DockTab $w={123}>Hierarchy</DockTab>
          </Tabs>
          <Tabs>
            <DockTab $w={63}>By layer</DockTab>
            <DockTab $w={106}>Embedded Form</DockTab>
          </Tabs>
          <DockFoot />
        </Dock>

        <Desk>
          <DeskLine>
            <Doc>
              <DocHead>
                <Icon name="win" />
                <DocTitle>New form...(Unnamed1)</DocTitle>
                <DocBumps />
                <DocTools>
                  <DocTool aria-label="Minimize"><Icon name="winMin" /></DocTool>
                  <DocTool aria-label="Maximize"><Icon name="winMax" /></DocTool>
                  <DocTool $gap={8} aria-label="Close form"><Icon name="winClose" /></DocTool>
                </DocTools>
              </DocHead>
              <Pane>
                <Sheet>
                  <RulerCorner aria-label="Ruler"><Icon name="protractor" size={20} /></RulerCorner>
                  <AcrossRuler />
                  <span />
                  <DownRuler />
                  <Canvas>
                    <Switcher>
                      <Source>
                        <SourceSign $size={40}>ja</SourceSign>
                        <SourceName>日本語</SourceName>
                      </Source>
                      <Source $on>
                        <SourceSign $size={44}>あ</SourceSign>
                        <SourceName>日本語 (かな漢⋯</SourceName>
                      </Source>
                    </Switcher>
                  </Canvas>
                  <ScrollBar size={23} />
                  <span />
                  <ScrollBar across size={33} />
                  <span />
                </Sheet>
              </Pane>
              <DocTabs>
                <DocTab $on>Common</DocTab>
                <DocTab>1Page</DocTab>
              </DocTabs>
            </Doc>
          </DeskLine>
        </Desk>

        <Strip>
          <StripTabs>
            <StripTab aria-label="Palette"><Icon name="palette" /></StripTab>
            <StripTab aria-label="Grid"><Icon name="lattice" /></StripTab>
            <StripTab>
              <Icon name="compass" />
              Select items to edit
            </StripTab>
          </StripTabs>
        </Strip>
      </Body>

      <StatusBar>
        <StatusButton aria-label="Guide"><Icon name="guide" /></StatusButton>
        <StatusButton aria-label="Dot grid"><Icon name="dotGrid" /></StatusButton>
        <StatusButton aria-label="Colors"><Icon name="colors" /></StatusButton>
        <StatusButton aria-label="Unlock"><Icon name="lock" size={20} /></StatusButton>
        <StatusCell $grow={644} />
        <StatusCell $grow={258} />
      </StatusBar>
    </Shell>
  );
}
